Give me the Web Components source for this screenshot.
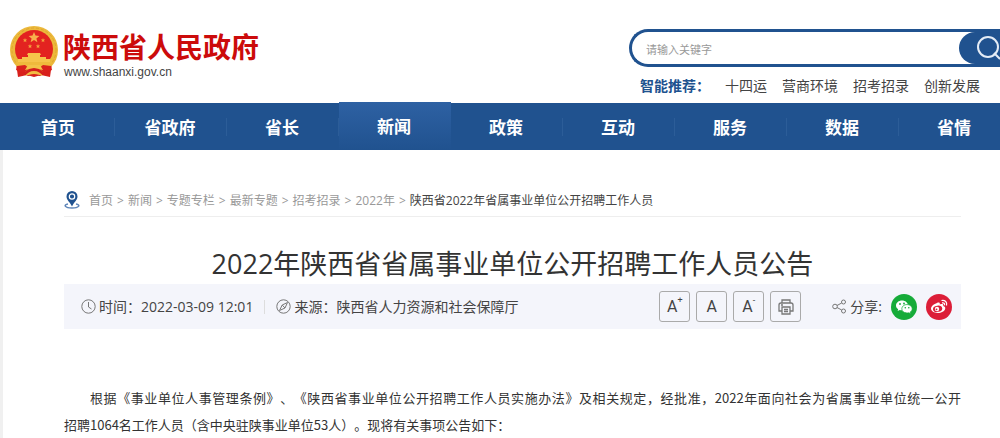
<!DOCTYPE html>
<html lang="zh-CN">
<head>
<meta charset="utf-8">
<meta name="viewport" content="width=device-width, initial-scale=1">
<title>2022年陕西省省属事业单位公开招聘工作人员公告</title>
<style>
  body {
    margin: 0;
    background: #fff;
    color: #444;
    font-family: "Open Sans", "Noto Sans CJK SC", sans-serif;
    font-size: 14px;
    overflow-x: hidden;
    --blue: #20528f;
  }
</style>
</head>
<body>
<site-header></site-header>
<site-nav>
  <nav-item>首页</nav-item>
  <nav-item>省政府</nav-item>
  <nav-item>省长</nav-item>
  <nav-item active>新闻</nav-item>
  <nav-item>政策</nav-item>
  <nav-item>互动</nav-item>
  <nav-item>服务</nav-item>
  <nav-item>数据</nav-item>
  <nav-item>省情</nav-item>
</site-nav>
<article-page>
  <bread-crumb slot="crumb" path="首页,新闻,专题专栏,最新专题,招考招录,2022年" current="陕西省2022年省属事业单位公开招聘工作人员"></bread-crumb>
  <span slot="title">2022年陕西省省属事业单位公开招聘工作人员公告</span>
  <meta-bar slot="meta" time="2022-03-09 12:01" source="陕西省人力资源和社会保障厅"></meta-bar>
  <article-text>
    <span slot="first">根据《事业单位人事管理条例》、《陕西省事业单位公开招聘工作人员实施办法》及相关规定，经批准，2022年面向社会为省属事业单位统一公开</span>
    <span>招聘1064名工作人员（含中央驻陕事业单位53人）。现将有关事项公告如下：</span>
  </article-text>
</article-page>

<script>
class BaseElement extends HTMLElement {
  constructor() {
    super()
    this.attachShadow({ mode: "open" })
  }
  connectedCallback() {
    const template = document.createElement("template");
    template.innerHTML = this.getStyles() + this.getTemplate();
    this.shadowRoot.replaceChildren(template.content.cloneNode(true));
  }
}

class SiteHeader extends BaseElement {
  getTemplate() {
    return `
      <a class="logo" href="#">
        <svg width="50" height="54" viewBox="0 0 50 54" aria-hidden="true">
          <path d="M7 38h36l-2 14-9-2-7 2-7-2-9 2z" fill="#d8201c"/>
          <circle cx="25" cy="25" r="24" fill="#ecb93b"/>
          <circle cx="25" cy="25" r="22" fill="none" stroke="#dfa630" stroke-width="1" stroke-dasharray="3 2"/>
          <circle cx="25" cy="24" r="19" fill="#e32320"/>
          <path d="M25 7l1.500 3.600 3.900.3-3 2.500 1 3.800-3.400-2.100-3.400 2.100 1-3.800-3-2.500 3.900-.3z" fill="#f8b04c"/>
          <g fill="#f5a03f">
            <path d="M16 13l.6 1.500 1.600.1-1.200 1 .4 1.600-1.400-.9-1.400.9.4-1.600-1.200-1 1.600-.1z"/>
            <path d="M34 13l.6 1.500 1.600.1-1.200 1 .4 1.600-1.400-.9-1.400.9.4-1.600-1.200-1 1.600-.1z"/>
            <path d="M21 19l.6 1.500 1.600.1-1.200 1 .4 1.600-1.400-.9-1.400.9.4-1.600-1.200-1 1.600-.1z"/>
            <path d="M29 19l.6 1.500 1.600.1-1.200 1 .4 1.600-1.400-.9-1.400.9.4-1.600-1.200-1 1.600-.1z"/>
          </g>
          <path d="M19 28h12l1 2h-1v2h6v2h4v4H9v-4h4v-2h6v-2h-1z" fill="#f6c44b"/>
          <path d="M7 37h36l-3 6H10z" fill="#efba3c"/>
          <path d="M8 41l8-1 4 3-5 5-8-3zM42 41l-8-1-4 3 5 5 8-3z" fill="#da211d"/>
          <path d="M19 40h12l3 5-9-2-9 2z" fill="#f3c348"/>
          <path d="M14 48l6-4 5-1 5 1 6 4-5 3-6-2-6 2z" fill="#d51f1c"/>
          <path d="M16 51c2-3 5-5 9-5s7 2 9 5c-3-1-6-2-9-2s-6 1-9 2z" fill="#f1bd43"/>
        </svg>
        <span class="names">
          <span class="name">陕西省人民政府</span>
          <span class="url">www.shaanxi.gov.cn</span>
        </span>
      </a>
      <div class="right">
        <form class="search" role="search">
          <input type="text" aria-label="搜索" placeholder="请输入关键字">
          <button type="button" aria-label="搜索">
            <svg width="24" height="24" viewBox="0 0 24 24" fill="none" stroke="#e4ecf6" stroke-width="2"><circle cx="12" cy="11" r="10"/><path d="M18 17l6 6"/></svg>
          </button>
        </form>
        <div class="hot">
          <b>智能推荐：</b>
          <a href="#">十四运</a>
          <a href="#">营商环境</a>
          <a href="#">招考招录</a>
          <a href="#">创新发展</a>
        </div>
      </div>
    `;
  }
  getStyles() {
    return `
      <style>
          :host {
            display: flex;
            justify-content: space-between;
            align-items: flex-start;
            height: 103px;
            overflow: hidden;
          }
          .logo {
            display: flex;
            gap: 4px;
            padding: 25px 0 0 9px;
            text-decoration: none;
          }
          .names {
            display: flex;
            flex-direction: column;
            gap: 2px;
            padding-top: 6px;
          }
          .name {
            font-size: 28px;
            line-height: 32px;
            font-weight: 700;
            color: #cc0b0b;
            white-space: nowrap;
          }
          .url {
            padding-left: 1px;
            font: 12px/14px "Liberation Sans", sans-serif;
            color: #444;
          }
          .right {
            flex: 0 0 371px;
            padding-top: 29px;
          }
          .search {
            display: flex;
            box-sizing: border-box;
            height: 38px;
            margin: 0;
            border: 3px solid var(--blue);
            border-right: 0;
            border-radius: 19px 0 0 19px;
          }
          input {
            flex: 1;
            min-width: 0;
            padding: 2px 0 0 14px;
            border: 0;
            outline: 0;
            background: transparent;
            font: inherit;
            font-size: 11px;
          }
          input::placeholder {
            color: #999;
          }
          button {
            width: 41px;
            padding: 0 0 0 17px;
            border: 0;
            border-radius: 16px 0 0 16px;
            background: var(--blue);
            cursor: pointer;
          }
          button svg {
            display: block;
          }
          .hot {
            display: flex;
            gap: 15px;
            padding: 9px 0 0 11px;
            line-height: 20px;
            white-space: nowrap;
          }
          .hot b {
            color: var(--blue);
          }
          .hot a {
            color: #444;
            text-decoration: none;
          }
      </style>
    `;
  }
}

class SiteNav extends BaseElement {
  getTemplate() {
    return `<nav><slot></slot></nav>`;
  }
  getStyles() {
    return `
      <style>
          :host {
            display: block;
            background: var(--blue);
          }
          nav {
            display: flex;
            height: 47px;
            padding-left: 3px;
          }
      </style>
    `;
  }
}

class NavItem extends BaseElement {
  getTemplate() {
    return `<a href="#"><slot></slot></a>`;
  }
  getStyles() {
    return `
      <style>
          :host {
            display: flex;
            flex: 0 0 112px;
            align-items: center;
            background: linear-gradient(#2c5d98, #2c5d98) right center / 1px 18px no-repeat;
          }
          :host([active]) {
            margin-top: -1px;
            background: linear-gradient(#2e61a3, #20528f);
          }
          a {
            flex: 1;
            padding: 2px 2px 0 0;
            color: #fff;
            font-size: 17px;
            line-height: 24px;
            font-weight: 700;
            text-align: center;
            text-decoration: none;
          }
      </style>
    `;
  }
}

class ArticlePage extends BaseElement {
  getTemplate() {
    return `
      <main>
        <slot name="crumb"></slot>
        <h1><slot name="title"></slot></h1>
        <slot name="meta"></slot>
        <slot></slot>
      </main>
    `;
  }
  getStyles() {
    return `
      <style>
          :host {
            display: block;
            border-left: 3px solid #f0f0f0;
          }
          main {
            padding: 34px 39px 0 61px;
          }
          h1 {
            margin: 0;
            padding-top: 27px;
            color: #333;
            font-size: 27px;
            line-height: 40px;
            font-weight: 400;
            text-align: center;
          }
      </style>
    `;
  }
}

class BreadCrumb extends BaseElement {
  getTemplate() {
    const links = this.getAttribute("path").split(",").map(name => `<a href="#">${name}</a><i>&gt;</i>`).join("");
    return `
      <svg width="16" height="18" viewBox="0 0 16 18" aria-hidden="true">
        <path d="M4 13c-5 1-3 4 4 4s9-3 4-4" fill="none" stroke="#5d84b8" stroke-width="1.500"/>
        <path d="M8 0a5.500 5.500 0 0 0-5.500 5.500C2.500 9 6 11 8 15.500 10 11 13.500 9 13.500 5.500A5.500 5.500 0 0 0 8 0z" fill="#20528f"/>
        <circle cx="8" cy="5.500" r="2.700" fill="#20528f" stroke="#fff" stroke-width="1.200"/>
      </svg>
      <nav>${links}<span>${this.getAttribute("current")}</span></nav>
    `;
  }
  getStyles() {
    return `
      <style>
          :host {
            display: flex;
            align-items: center;
            gap: 9px;
            height: 32px;
            border-bottom: 1px solid #eee;
            color: #999;
            font-size: 12px;
            line-height: 20px;
          }
          nav {
            padding-top: 2px;
          }
          a {
            color: inherit;
            text-decoration: none;
          }
          i {
            padding: 0 4px;
            font-style: normal;
          }
          span {
            color: #444;
          }
      </style>
    `;
  }
}

class MetaBar extends BaseElement {
  getTemplate() {
    return `
      <div class="info">
        <svg width="15" height="15" viewBox="0 0 15 15"><circle cx="7.500" cy="7.500" r="6.700"/><path d="M7.500 3v5l3 2"/></svg>
        <span>时间：${this.getAttribute("time")}</span>
        <hr>
        <svg width="15" height="15" viewBox="0 0 15 15"><circle cx="7.500" cy="7.500" r="6.700"/><path d="M11.500 3.500L6.200 6l-2.700 5.500L9 9zM6.200 6L9 9"/></svg>
        <span>来源：${this.getAttribute("source")}</span>
      </div>
      <div class="tools">
        <button type="button">A<sup>+</sup></button>
        <button type="button">A</button>
        <button type="button">A<sup>-</sup></button>
        <button type="button" aria-label="打印">
          <svg width="16" height="16" viewBox="0 0 16 16" stroke-width="1.300"><path d="M4 4V1h8v3M4 12H1V6q0-2 2-2h10q2 0 2 2v6h-3M4 8h8v7H4zM6 10.500h4M6 12.500h4M3 6h2"/></svg>
        </button>
      </div>
      <div class="share">
        <svg width="15" height="15" viewBox="0 0 15 15"><circle cx="3" cy="7.500" r="2.300"/><circle cx="11.500" cy="3" r="2"/><circle cx="11.500" cy="12" r="2"/><path d="M5 6.500L9.700 4M5 8.500l4.700 2.500"/></svg>
        <span>分享:</span>
        <a href="#" aria-label="微信">
          <svg class="brand" width="26" height="26" viewBox="0 0 26 26">
            <circle cx="13" cy="13" r="13" fill="#16ab39"/>
            <path d="M11 6.500c-3.300 0-6 2.200-6 4.900 0 1.600.9 2.900 2.200 3.800l-.6 1.900 2.200-1.100c.7.200 1.400.3 2.200.3 3.300 0 6-2.200 6-4.900s-2.700-4.900-6-4.900z" fill="#fff"/>
            <path d="M16 10.500c-2.900 0-5.200 1.900-5.200 4.300s2.300 4.200 5.200 4.200c.6 0 1.200-.1 1.800-.2l1.900 1-.5-1.700c1.200-.8 2-1.900 2-3.300 0-2.400-2.300-4.300-5.200-4.300z" fill="#fff" stroke="#16ab39" stroke-width=".7"/>
            <g fill="#16ab39"><circle cx="9" cy="10" r=".9"/><circle cx="13" cy="9.500" r=".9"/><circle cx="14.300" cy="13.700" r=".8"/><circle cx="17.800" cy="13.700" r=".8"/></g>
          </svg>
        </a>
        <a href="#" aria-label="微博">
          <svg class="brand" width="26" height="26" viewBox="0 0 26 26">
            <circle cx="13" cy="13" r="13" fill="#dc1e38"/>
            <path d="M11 9c1.800-.9 3.200-.4 2.800 1.500 2.200-.8 4-.5 3.500 1.500 1.500.5 2.200 1.400 1.900 2.700-.5 2.600-3.800 4.300-7.400 4.300-3.700 0-6.800-1.700-6.800-4.400C5 12.400 8 9.800 11 9z" fill="#fff"/>
            <ellipse cx="11.600" cy="14.800" rx="4.600" ry="3.100" fill="#dc1e38" transform="rotate(-8 11.600 14.800)"/>
            <circle cx="11" cy="15" r="2.200" fill="#fff"/>
            <circle cx="10.500" cy="15.300" r=".9" fill="#dc1e38"/>
            <path d="M15.500 6.500c3.500-.8 6 1.800 5 5M16 8.900c1.800-.4 3 .7 2.500 2.300" fill="none" stroke="#fff" stroke-width="1.200"/>
          </svg>
        </a>
      </div>
    `;
  }
  getStyles() {
    return `
      <style>
          :host {
            display: flex;
            align-items: center;
            height: 45px;
            padding: 0 9px 0 17px;
            background: #f4f5fb;
            line-height: 20px;
            white-space: nowrap;
          }
          .info, .tools, .share {
            display: flex;
            align-items: center;
          }
          .info {
            gap: 3px;
            margin-right: auto;
          }
          .tools {
            gap: 6px;
            margin-right: 31px;
          }
          .share {
            gap: 9px;
          }
          .share span {
            margin-left: -6px;
          }
          svg {
            display: block;
            fill: none;
            stroke: #777;
          }
          svg.brand {
            stroke: none;
          }
          hr {
            width: 1px;
            height: 14px;
            margin: 0 8px;
            border: 0;
            background: #ddd;
          }
          button {
            display: flex;
            justify-content: center;
            align-items: center;
            box-sizing: border-box;
            width: 31px;
            height: 31px;
            padding: 0;
            border: 1px solid #aaa;
            border-radius: 3px;
            background: transparent;
            color: #444;
            font: 16px/20px Roboto, sans-serif;
            cursor: pointer;
          }
          sup {
            align-self: flex-start;
            font-size: 9px;
            line-height: 16px;
          }
      </style>
    `;
  }
}

class ArticleText extends BaseElement {
  getTemplate() {
    return `<p><span class="first"><slot name="first"></slot></span><slot></slot></p>`;
  }
  getStyles() {
    return `
      <style>
          :host {
            display: block;
            padding-top: 55px;
          }
          p {
            margin: 0;
            color: #333;
            font-family: "Noto Sans CJK SC", sans-serif;
            font-size: 13px;
            line-height: 27px;
            text-spacing-trim: space-all;
          }
          .first {
            display: block;
            text-indent: 2em;
            text-align: justify;
            text-align-last: justify;
          }
      </style>
    `;
  }
}

customElements.define("site-header", SiteHeader);
customElements.define("site-nav", SiteNav);
customElements.define("nav-item", NavItem);
customElements.define("article-page", ArticlePage);
customElements.define("bread-crumb", BreadCrumb);
customElements.define("meta-bar", MetaBar);
customElements.define("article-text", ArticleText);
</script>
</body>
</html>
